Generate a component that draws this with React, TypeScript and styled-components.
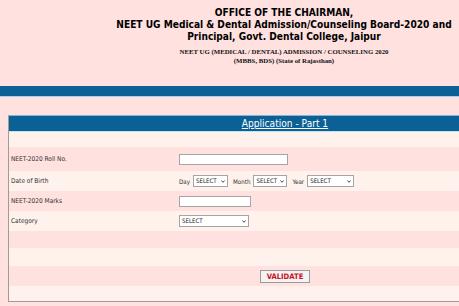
import React from "react";
import styled, { createGlobalStyle } from "styled-components";

const Global = createGlobalStyle`
  html, body { margin: 0; padding: 0; }
  body {
    background: #ffe1df;
    overflow: hidden;
    width: 459px;
    height: 306px;
    font-family: "DejaVu Sans", Verdana, sans-serif;
  }
`;

const Page = styled.div`
  width: 568px;
`;

const Header = styled.header`
  padding-top: 7px;
  text-align: center;
`;

const Title = styled.h1`
  margin: 0;
  font-family: "DejaVu Sans Condensed", "DejaVu Sans", sans-serif;
  font-weight: bold;
  font-size: 10.1px;
  line-height: 12px;
  color: #000;
`;

const Subtitle = styled.p`
  margin: 4px 0 0;
  font-family: "Liberation Serif", "Times New Roman", serif;
  font-weight: bold;
  font-size: 6.8px;
  line-height: 9px;
  color: #111;
`;

const BlueBar = styled.div`
  margin-top: 21px;
  height: 10px;
  background: #0b6196;
  border-bottom: 1px solid #9fd3ee;
`;

const Panel = styled.section`
  margin: 18px 0 0 8px;
  width: 552px;
  border: 1px solid #9c9c9c;
  border-top-color: #7fb6d6;
`;

const PanelHeader = styled.div`
  height: 16px;
  background: #0b6196;
  display: flex;
  align-items: center;
  justify-content: center;
  border-bottom: 1px solid #bfe3f4;
  box-sizing: border-box;
`;

const PanelTitle = styled.span`
  color: #fff;
  font-family: "DejaVu Sans Condensed", "DejaVu Sans", sans-serif;
  font-size: 10.1px;
  line-height: 12px;
  text-decoration: underline;
`;

const Row = styled.div<{ $h: number; $alt: boolean }>`
  display: grid;
  grid-template-columns: 168px 1fr;
  align-items: center;
  height: ${(p) => p.$h}px;
  background: ${(p) => (p.$alt ? "#ffe1df" : "#fff1ec")};
  padding-left: 2px;
`;

const CenterRow = styled.div<{ $h: number; $alt: boolean }>`
  display: flex;
  align-items: center;
  justify-content: center;
  height: ${(p) => p.$h}px;
  background: ${(p) => (p.$alt ? "#ffe1df" : "#fff1ec")};
`;

const Label = styled.span`
  font-family: "DejaVu Sans Condensed", "DejaVu Sans", sans-serif;
  font-size: 6.5px;
  color: #333;
`;

const Field = styled.div`
  display: flex;
  align-items: center;
  gap: 3px;
`;

const TextInput = styled.input<{ $w: number }>`
  box-sizing: border-box;
  width: ${(p) => p.$w}px;
  height: 11px;
  padding: 0;
  margin: 0;
  border: 1px solid #a5a5a5;
  background: #fff;
`;

const SelectWrap = styled.span`
  position: relative;
  display: inline-flex;
`;

const Select = styled.select<{ $w: number }>`
  appearance: none;
  box-sizing: border-box;
  width: ${(p) => p.$w}px;
  height: 12px;
  margin: 0;
  padding: 0 0 0 2px;
  border: 1px solid #a5a5a5;
  border-radius: 0;
  background: #fff;
  font-family: "DejaVu Sans Condensed", "DejaVu Sans", sans-serif;
  font-size: 6.1px;
  color: #222;
  line-height: 10px;
`;

const Chevron = styled.svg`
  position: absolute;
  right: 3px;
  top: 4.5px;
  width: 4px;
  height: 3px;
  pointer-events: none;
`;

const SmallLabel = styled(Label)`
  font-size: 6.2px;
  margin-left: 2px;
  &:first-child {
    margin-left: 0;
  }
`;

const Button = styled.button`
  box-sizing: border-box;
  width: 50px;
  height: 13px;
  padding: 0;
  margin: 0;
  background: #f4f2f2;
  border: 1px solid #9a9a9a;
  color: #c8101a;
  font-family: "DejaVu Sans Condensed", "DejaVu Sans", sans-serif;
  font-weight: bold;
  font-size: 7.6px;
  line-height: 11px;
`;

const Drop = ({ w }: { w: number }) => (
  <SelectWrap>
    <Select $w={w} defaultValue="">
      <option value="">SELECT</option>
    </Select>
    <Chevron viewBox="0 0 4 3">
      <path d="M0.4 0.5 L2 2.3 L3.6 0.5" fill="none" stroke="#333" strokeWidth="0.9" />
    </Chevron>
  </SelectWrap>
);

export default function App() {
  return (
    <Page>
      <Global />
      <Header>
        <Title>
          OFFICE OF THE CHAIRMAN,
          <br />
          NEET UG Medical &amp; Dental Admission/Counseling Board-2020 and
          <br />
          Principal, Govt. Dental College, Jaipur
        </Title>
        <Subtitle>
          NEET UG (MEDICAL / DENTAL) ADMISSION / COUNSELING 2020
          <br />
          (MBBS, BDS) (State of Rajasthan)
        </Subtitle>
      </Header>
      <BlueBar />
      <Panel>
        <PanelHeader>
          <PanelTitle>Application - Part 1</PanelTitle>
        </PanelHeader>
        <CenterRow $h={15} $alt={false} />
        <Row $h={24} $alt={true}>
          <Label>NEET-2020 Roll No.</Label>
          <Field>
            <TextInput $w={109} />
          </Field>
        </Row>
        <Row $h={20} $alt={false}>
          <Label>Date of Birth</Label>
          <Field>
            <SmallLabel>Day</SmallLabel>
            <Drop w={35} />
            <SmallLabel>Month</SmallLabel>
            <Drop w={34} />
            <SmallLabel>Year</SmallLabel>
            <Drop w={47} />
          </Field>
        </Row>
        <Row $h={20} $alt={true}>
          <Label>NEET-2020 Marks</Label>
          <Field>
            <TextInput $w={72} />
          </Field>
        </Row>
        <Row $h={20} $alt={false}>
          <Label>Category</Label>
          <Field>
            <Drop w={70} />
          </Field>
        </Row>
        <CenterRow $h={17} $alt={true} />
        <CenterRow $h={18} $alt={false} />
        <CenterRow $h={20} $alt={true}>
          <Button type="button">VALIDATE</Button>
        </CenterRow>
        <CenterRow $h={15} $alt={false} />
      </Panel>
    </Page>
  );
}
